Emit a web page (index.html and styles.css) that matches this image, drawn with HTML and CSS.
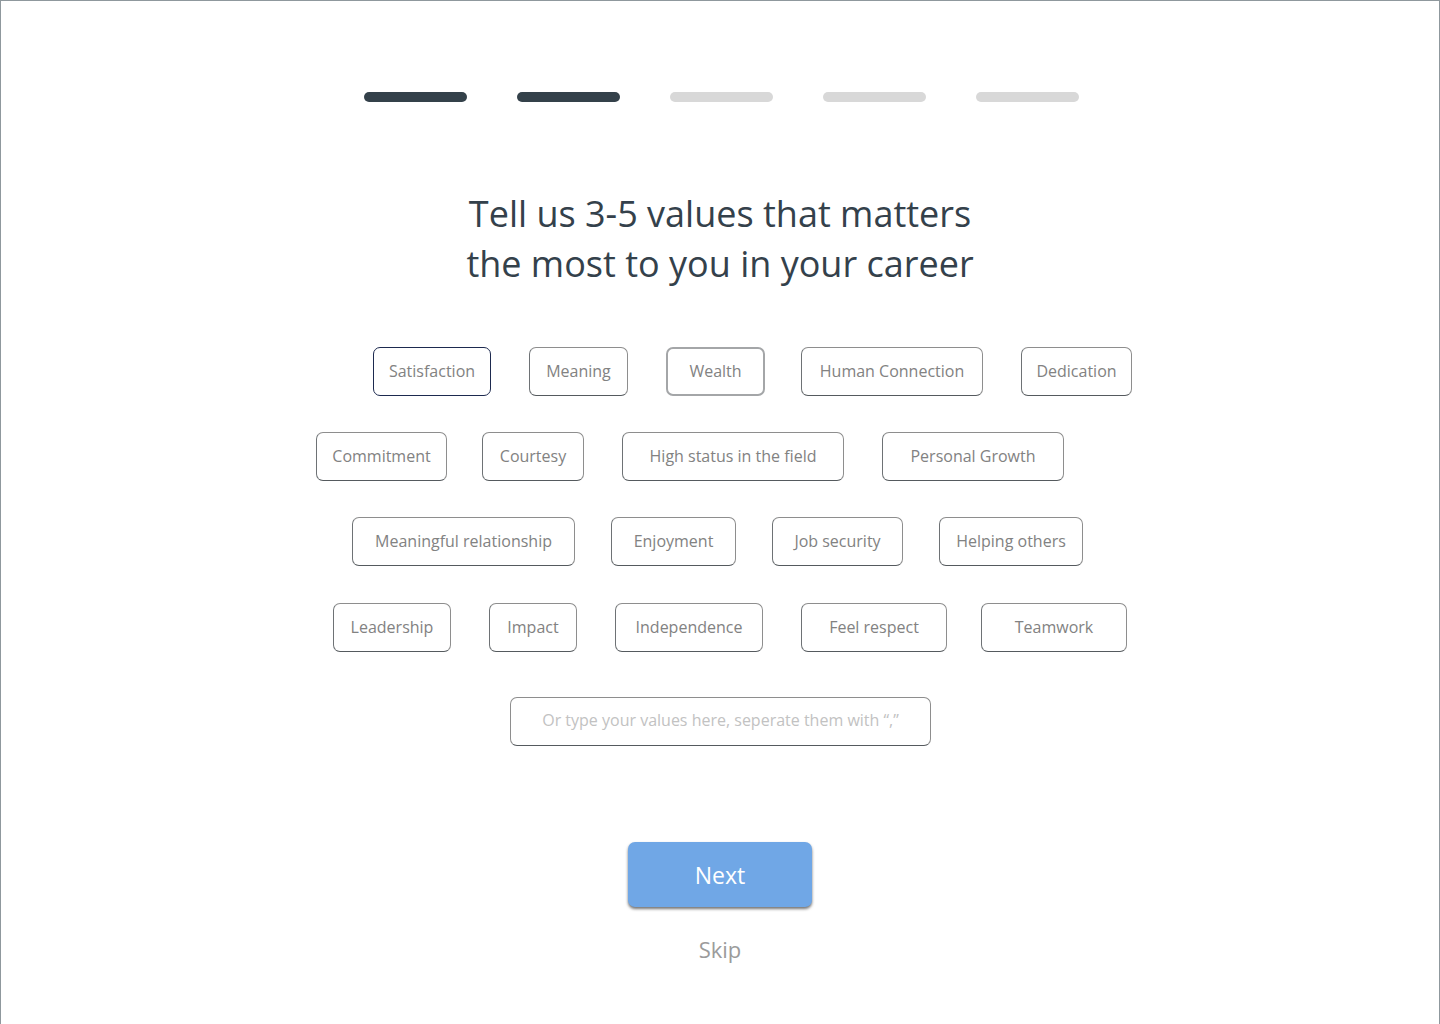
FILE: index.html
```html
<!DOCTYPE html>
<html lang="en">
<head>
<meta charset="utf-8">
<title>Values</title>
<link rel="stylesheet" href="styles.css">
</head>
<body>
<div class="page">
  <div class="progress">
    <span class="bar done"></span>
    <span class="bar done"></span>
    <span class="bar"></span>
    <span class="bar"></span>
    <span class="bar"></span>
  </div>
  <h1 class="title">Tell us 3-5 values that matters<br>the most to you in your career</h1>
  <div class="chips">
    <div class="row row1">
      <button class="chip w118 selected">Satisfaction</button>
      <button class="chip w99">Meaning</button>
      <button class="chip w99 light">Wealth</button>
      <button class="chip w182 snug">Human Connection</button>
      <button class="chip w111">Dedication</button>
    </div>
    <div class="row row2">
      <button class="chip w131">Commitment</button>
      <button class="chip w102 tight">Courtesy</button>
      <button class="chip w222">High status in the field</button>
      <button class="chip w182">Personal Growth</button>
    </div>
    <div class="row row3">
      <button class="chip w223">Meaningful relationship</button>
      <button class="chip w125">Enjoyment</button>
      <button class="chip w131">Job security</button>
      <button class="chip w144">Helping others</button>
    </div>
    <div class="row row4">
      <button class="chip w118">Leadership</button>
      <button class="chip w88">Impact</button>
      <button class="chip w148">Independence</button>
      <button class="chip w146">Feel respect</button>
      <button class="chip w146 tighter">Teamwork</button>
    </div>
  </div>
  <input class="custom" type="text" placeholder="Or type your values here, seperate them with “,”">
  <button class="next">Next</button>
  <a class="skip" href="#">Skip</a>
</div>
</body>
</html>
```

FILE: styles.css
```css
html, body {
  margin: 0;
  padding: 0;
  background: #ffffff;
}
body {
  font-family: "Open Sans", "Liberation Sans", sans-serif;
}
.page {
  box-sizing: border-box;
  width: 1440px;
  height: 1024px;
  border: 1px solid #8f989d;
  border-bottom: none;
  display: flex;
  flex-direction: column;
  align-items: center;
  padding-top: 91px;
  overflow: hidden;
}
.progress {
  display: flex;
  gap: 50px;
  margin-left: 2px;
}
.bar {
  display: block;
  width: 103px;
  height: 10px;
  border-radius: 5px;
  background: #d8d8d8;
}
.bar.done {
  background: #34414a;
}
.title {
  margin: 87px 0 0;
  font-size: 36px;
  font-weight: 400;
  line-height: 50px;
  color: #34414b;
  text-align: center;
}
.chips {
  align-self: stretch;
  margin-top: 58px;
  display: flex;
  flex-direction: column;
  gap: 36px;
}
.row {
  display: flex;
  gap: 37px;
}
.row1 { padding-left: 372px; gap: 38px; }
.row2 { padding-left: 315px; gap: 38px; }
.row3 { padding-left: 351px; gap: 36px; }
.row4 { padding-left: 332px; margin-top: 1px; gap: 38px; }
.chip.snug { margin-left: -2px; }
.chip.tight { margin-left: -3px; }
.chip.tighter { margin-left: -4px; }
.chip {
  box-sizing: border-box;
  height: 49px;
  padding: 0 0 2px;
  border: 1px solid #8e8e8e;
  border-bottom-color: #555a5e;
  border-left-color: #6e7275;
  border-radius: 7px;
  background: #ffffff;
  font-family: inherit;
  font-size: 16px;
  color: #828282;
  text-align: center;
  cursor: pointer;
}
.chip.selected {
  border-color: #1d2a4f;
}
.chip.light {
  border: 2px solid #a4a6a8;
}
.w88 { width: 88px; }
.w99 { width: 99px; }
.w102 { width: 102px; }
.w111 { width: 111px; }
.w118 { width: 118px; }
.w125 { width: 125px; }
.w131 { width: 131px; }
.w144 { width: 144px; }
.w146 { width: 146px; }
.w148 { width: 148px; }
.w182 { width: 182px; }
.w222 { width: 222px; }
.w223 { width: 223px; }
.custom {
  box-sizing: border-box;
  margin-top: 45px;
  margin-left: 1px;
  width: 421px;
  height: 49px;
  padding: 0 0 3px;
  border: 1px solid #8e8e8e;
  border-bottom-color: #555a5e;
  border-radius: 7px;
  font-family: inherit;
  font-size: 16px;
  color: #555;
  text-align: center;
  outline: none;
}
.custom::placeholder {
  color: #c2c2c2;
}
.next {
  margin-top: 96px;
  width: 184px;
  height: 65px;
  border: none;
  border-radius: 7px;
  background: #70a7e6;
  box-shadow: 0 2px 3px rgba(0, 0, 0, 0.55);
  font-family: inherit;
  font-size: 23px;
  color: #ffffff;
  cursor: pointer;
}
.skip {
  margin-top: 26px;
  font-size: 22px;
  line-height: 32px;
  color: #9b9b9b;
  text-decoration: none;
}
```
